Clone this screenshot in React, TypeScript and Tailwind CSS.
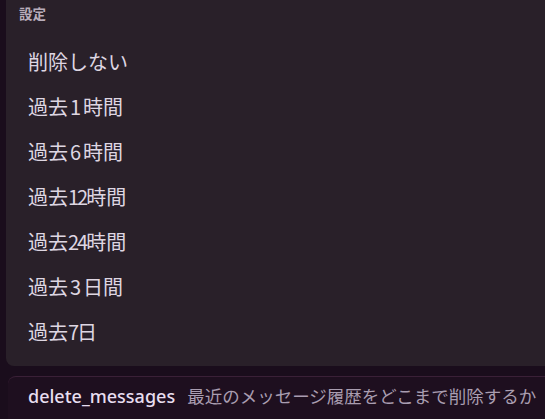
import React from "react";

type Seg = { t: string; d?: boolean; sp?: boolean };
const items: Seg[][] = [
  [{ t: "削除しない" }],
  [{ t: "過去" }, { t: "1", d: true, sp: true }, { t: "時間" }],
  [{ t: "過去" }, { t: "6", d: true, sp: true }, { t: "時間" }],
  [{ t: "過去" }, { t: "12", d: true }, { t: "時間" }],
  [{ t: "過去" }, { t: "24", d: true }, { t: "時間" }],
  [{ t: "過去" }, { t: "3", d: true, sp: true }, { t: "日間" }],
  [{ t: "過去" }, { t: "7", d: true }, { t: "日" }],
];

export default function App() {
  return (
    <div
      className="w-[545px] h-[419px] overflow-hidden bg-[#1a0d1c] flex flex-col"
      style={{ fontFamily: '"Noto Sans", "Noto Sans CJK JP", sans-serif' }}
    >
      <div className="ml-[6px] h-[366px] shrink-0 bg-[#292029] rounded-bl-[8px] flex flex-col">
        <div className="pl-[13px] pt-[4px] h-[24px] text-[13.5px] font-bold leading-[20px] text-[#b9adbb]">設定</div>
        <div
          className="flex flex-col pl-[22px] pt-[15px]"
          style={{ fontFamily: '"Noto Sans CJK JP", sans-serif' }}
        >
          {items.map((segs, i) => (
            <div key={i} className="h-[45px] text-[20px] leading-[45px] text-[#ded6e2] whitespace-nowrap">
              {segs.map((s, j) =>
                s.d ? (
                  <span key={j} className={s.sp ? "mx-[2px]" : "tracking-[-2px]"}>
                    {s.t}
                  </span>
                ) : (
                  <span key={j}>{s.t}</span>
                )
              )}
            </div>
          ))}
        </div>
      </div>
      <div className="ml-[8px] mt-[10px] flex-1 bg-[#1e0f1f] border-t border-[#3a2037] rounded-tl-[8px] flex items-center pl-[20px] pb-[4px]">
        <span className="text-[18px] font-medium text-[#e8def0]">delete_messages</span>
        <span className="ml-[12px] text-[17.5px] text-[#a99db0] whitespace-nowrap">最近のメッセージ履歴をどこまで削除するか</span>
      </div>
    </div>
  );
}
